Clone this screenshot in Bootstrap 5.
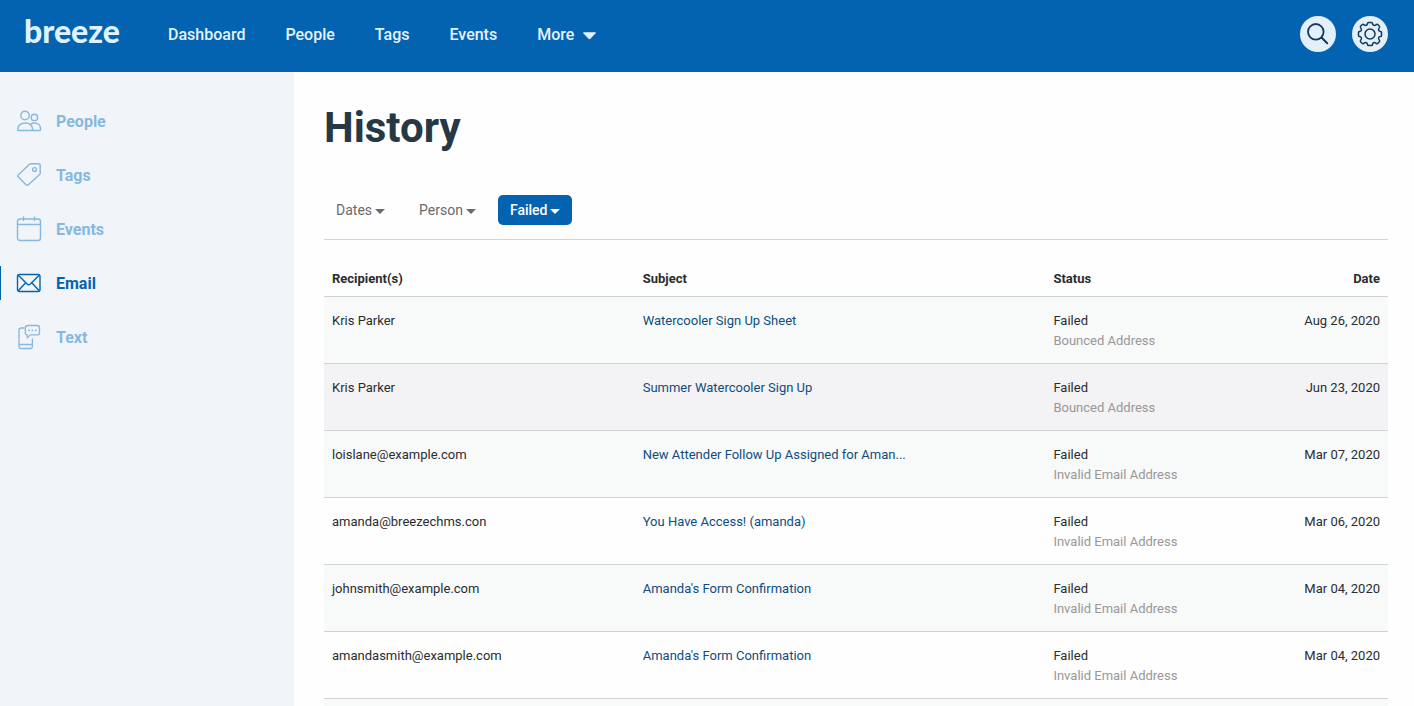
<!DOCTYPE html>
<html lang="en">
<head>
<meta charset="utf-8">
<meta name="viewport" content="width=device-width, initial-scale=1">
<title>History - Breeze</title>
<link href="https://cdn.jsdelivr.net/npm/bootstrap@5.3.0/dist/css/bootstrap.min.css" rel="stylesheet">
<style>
  body { font-family: Roboto, "Liberation Sans", sans-serif; background: #fefefe; color: #2a2d30; }
  a { text-decoration: none; }
  .topbar { background: #0463b1; min-height: 72px; padding: 0 26px 4px 24px; }
  .brand { font: 900 32px/40px Lato, sans-serif; color: #dff2ff; width: 94px; margin-right: 50px; padding-bottom: 6px; }
  .topnav { gap: 40px; }
  .topnav .nav-link { padding: 2px 0 0; font-size: 16px; line-height: 24px; font-weight: 500; color: #e3f3ff; }
  .round-btn { width: 36px; height: 36px; border: 0; background: #e3f0fa; color: #143a5c; }
  .sidebar { width: 294px; background: #f1f4f9; padding-top: 32px; }
  .sidebar .nav-link { gap: 14px; padding: 0 16px; height: 34px; line-height: 26px; margin-bottom: 20px; font-size: 16px; font-weight: 700; color: #86b9dd; }
  .sidebar .nav-link span { padding-top: 2px; }
  .sidebar .nav-link.active { color: #0463ad; box-shadow: inset 1px 0 #0463ad; }
  .line-icon { fill: none; stroke: currentColor; stroke-linecap: round; stroke-linejoin: round; }
  .content { padding: 31px 26px 0 30px; }
  h1 { font-size: 42px; line-height: 50px; font-weight: 700; color: #263845; margin-bottom: 42px; }
  .filters { gap: 10px; padding-bottom: 14px; border-bottom: 1px solid #d0d2d4; margin-bottom: 29px; }
  .filters .btn { --bs-btn-border-width: 0; padding: 0 12px; font-size: 14px; line-height: 30px; border-radius: 5px; color: #6a6a6a; }
  .filters .btn.active { background: #0463b1; color: #fff; font-weight: 500; }
  .filters .btn::after { margin-left: 3px; vertical-align: 1px; border-width: 5px 5px 0; }
  .history { table-layout: fixed; font-size: 13px; line-height: 20px; --bs-table-bg: transparent; color: #2a2d30; border-color: #d0d3d5; }
  .history th { padding: 0 8px 7px; font-weight: 700; }
  .history td { padding: 14px 8px 12px; }
  .history tbody tr:nth-child(odd) { background: #f8f9f9; }
  .history tbody tr.hovered { background: #f3f2f4; }
  .history a { color: #0f4d80; }
  .reason { color: #989898; }
  .col-recipient { width: 29.2%; }
  .col-subject { width: 38.6%; }
  .col-status { width: 19%; }
  .next-row { min-height: 7px; background: #f8f9f9; }
</style>
</head>
<body class="vh-100 overflow-hidden d-flex flex-column">
<header class="topbar d-flex align-items-center flex-shrink-0">
  <a class="brand" href="#">breeze</a>
  <nav class="nav topnav" aria-label="Main">
    <a class="nav-link" href="#">Dashboard</a>
    <a class="nav-link" href="#">People</a>
    <a class="nav-link" href="#">Tags</a>
    <a class="nav-link" href="#">Events</a>
    <a class="nav-link d-flex align-items-center gap-2" href="#">More
      <svg width="15" height="9" viewBox="0 0 14 8" fill="currentColor" aria-hidden="true"><path d="M2 1h10q1.500 0 .7 1L7.900 7q-.9.800-1.800 0L1.300 2Q.5 1 2 1z"/></svg></a>
  </nav>
  <div class="d-flex gap-3 ms-auto">
    <button type="button" class="round-btn rounded-circle d-flex align-items-center justify-content-center p-0" aria-label="Search">
      <svg class="line-icon" width="24" height="24" viewBox="0 0 24 24" stroke-width="1.800"><circle cx="9.800" cy="9.800" r="7.800"/><path d="M15.500 15.500l5.700 5.700" stroke-width="2"/></svg>
    </button>
    <button type="button" class="round-btn rounded-circle d-flex align-items-center justify-content-center p-0" aria-label="Settings">
      <svg class="line-icon" width="26" height="26" viewBox="-13 -13 26 26" stroke-width="1.500"><circle r="5"/><path d="M-1.500-11.500H1.500Q2.300-11.500 2.500-10.500 3-8 5-8.700L6.500-9.500Q7.300-9.900 8-9.200L9.200-8Q9.900-7.300 9.500-6.500L8.700-5Q8-3 10.500-2.500 11.500-2.300 11.500-1.500V1.500Q11.500 2.300 10.500 2.500 8 3 8.700 5L9.500 6.500Q9.900 7.300 9.200 8L8 9.200Q7.300 9.900 6.500 9.500L5 8.700Q3 8 2.500 10.500 2.300 11.500 1.500 11.500H-1.500Q-2.300 11.500-2.500 10.500-3 8-5 8.700L-6.500 9.500Q-7.300 9.900-8 9.200L-9.200 8Q-9.900 7.300-9.500 6.500L-8.700 5Q-8 3-10.500 2.500-11.500 2.300-11.500 1.500V-1.500Q-11.500-2.300-10.500-2.500-8-3-8.700-5L-9.500-6.500Q-9.900-7.300-9.200-8L-8-9.200Q-7.300-9.900-6.500-9.500L-5-8.700Q-3-8-2.500-10.500-2.300-11.500-1.500-11.500z"/></svg>
    </button>
  </div>
</header>
<div class="d-flex flex-grow-1">
  <nav class="sidebar nav flex-column flex-nowrap flex-shrink-0" aria-label="Section">
    <a class="nav-link d-flex align-items-center" href="#">
      <svg class="line-icon" width="26" height="26" viewBox="0 0 26 26" stroke-width="1.400"><circle cx="9" cy="7.500" r="4.200"/><circle cx="18.400" cy="9.400" r="3.200"/><path d="M2 22.500h14.500v-1.600c0-3.600-3-5.900-7.200-5.900s-7.600 2.300-7.600 5.900v1q0 .6.6.6zM14.500 16.200c1.200-.8 2.500-1.200 4-1.200 3.500 0 6 2.200 6 5.600v1.200q0 .7-.7.7h-7.300"/></svg><span>People</span></a>
    <a class="nav-link d-flex align-items-center" href="#">
      <svg class="line-icon" width="26" height="26" viewBox="0 0 26 26" stroke-width="1.400"><path d="M13.600 2.200q.5-.5 1.200-.5h8q1.400 0 1.400 1.400v8q0 .8-.5 1.300L12.400 22.700q-1.200 1.200-2.400 0l-7.600-7.600q-1.200-1.200 0-2.400z"/><circle cx="18.500" cy="7.500" r="1.900"/></svg><span>Tags</span></a>
    <a class="nav-link d-flex align-items-center" href="#">
      <svg class="line-icon" width="26" height="26" viewBox="0 0 26 26" stroke-width="1.400"><rect x="1.500" y="3" width="23" height="21.500" rx="2.500"/><path d="M1.500 8.500h23M7.500 1v3.500M18.500 1v3.500"/></svg><span>Events</span></a>
    <a class="nav-link active d-flex align-items-center" href="#" aria-current="page">
      <svg class="line-icon" width="26" height="26" viewBox="0 0 26 26" stroke-width="1.400"><rect x="1.500" y="4.500" width="22.500" height="17" rx="2"/><path d="M2.500 5.500l8.600 8.600q1.600 1.500 3.200 0L23 5.500M2.500 20.500l7-7.500M23 20.500l-7-7.500"/></svg><span>Email</span></a>
    <a class="nav-link d-flex align-items-center" href="#">
      <svg class="line-icon" width="26" height="26" viewBox="0 0 26 26" stroke-width="1.300"><path d="M8 4H5.200Q3 4 3 6.200v16Q3 24.500 5.200 24.500h9q2.200 0 2.200-2.300V15M3 20.500h13.400"/><path d="M12.300 1.500h9q2.200 0 2.200 2.200v5q0 2.200-2.200 2.200h-7l-3 3v-3q-2-.2-2-2.200v-5q0-2.200 3-2.200z"/><path d="M13 6.300h.1M16.400 6.300h.1M19.800 6.300h.1" stroke-width="1.800"/></svg><span>Text</span></a>
  </nav>
  <main class="content flex-grow-1 d-flex flex-column">
    <h1>History</h1>
    <div class="filters d-flex">
      <button type="button" class="btn dropdown-toggle">Dates</button>
      <button type="button" class="btn dropdown-toggle">Person</button>
      <button type="button" class="btn dropdown-toggle active">Failed</button>
    </div>
    <table class="table history mb-0">
      <thead>
        <tr><th scope="col" class="col-recipient">Recipient(s)</th><th scope="col" class="col-subject">Subject</th><th scope="col" class="col-status">Status</th><th scope="col" class="text-end">Date</th></tr>
      </thead>
      <tbody>
        <tr><td>Kris Parker</td><td><a href="#">Watercooler Sign Up Sheet</a></td><td>Failed<div class="reason">Bounced Address</div></td><td class="text-end">Aug 26, 2020</td></tr>
        <tr class="hovered"><td>Kris Parker</td><td><a href="#">Summer Watercooler Sign Up</a></td><td>Failed<div class="reason">Bounced Address</div></td><td class="text-end">Jun 23, 2020</td></tr>
        <tr><td>loislane@example.com</td><td><a href="#">New Attender Follow Up Assigned for Aman...</a></td><td>Failed<div class="reason">Invalid Email Address</div></td><td class="text-end">Mar 07, 2020</td></tr>
        <tr><td>amanda@breezechms.con</td><td><a href="#">You Have Access! (amanda)</a></td><td>Failed<div class="reason">Invalid Email Address</div></td><td class="text-end">Mar 06, 2020</td></tr>
        <tr><td>johnsmith@example.com</td><td><a href="#">Amanda's Form Confirmation</a></td><td>Failed<div class="reason">Invalid Email Address</div></td><td class="text-end">Mar 04, 2020</td></tr>
        <tr><td>amandasmith@example.com</td><td><a href="#">Amanda's Form Confirmation</a></td><td>Failed<div class="reason">Invalid Email Address</div></td><td class="text-end">Mar 04, 2020</td></tr>
      </tbody>
    </table>
    <div class="next-row flex-grow-1"></div>
  </main>
</div>
<script src="https://cdn.jsdelivr.net/npm/bootstrap@5.3.0/dist/js/bootstrap.bundle.min.js"></script>
</body>
</html>
